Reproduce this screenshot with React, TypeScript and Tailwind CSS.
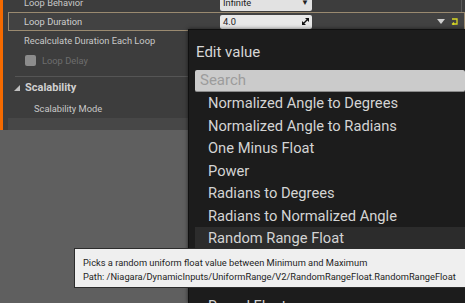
import React from "react";

const font = { fontFamily: "Roboto, 'Noto Sans', sans-serif" };

function Row({ children, className = "" }: { children: React.ReactNode; className?: string }) {
  return <div className={"flex items-center " + className}>{children}</div>;
}

export default function App() {
  const items = [
    "Normalized Angle to Degrees",
    "Normalized Angle to Radians",
    "One Minus Float",
    "Power",
    "Radians to Degrees",
    "Radians to Normalized Angle",
    "Random Range Float",
    "",
    "",
    "Round Float",
  ];
  return (
    <div className="relative w-[465px] h-[303px] overflow-hidden bg-[#5f5f5f]" style={font}>
      {/* details panel */}
      <div className="flex h-[130px]">
        <div className="w-[3px] bg-[#f56a00]" />
        <div className="flex-1 flex flex-col bg-[#3d3d3d] pl-[5px]">
          <div className="flex flex-col -mt-[6px]">
            <Row className="h-[18px] text-[9.3px] text-[#c8c8c8]">
              <div className="w-[212px] pl-[16px]">Loop Behavior</div>
              <div className="w-[92px] h-[16px] bg-[#e2e2e2] rounded-[2px] flex items-center justify-between px-[3px] text-[#222]">
                <span>Infinite</span>
                <span className="text-[8px]">▼</span>
              </div>
              <div className="flex-1" />
              <div className="w-px self-stretch bg-[#5a5a5a] mr-[3px]" />
            </Row>
            <Row className="h-[19px] text-[9.3px] text-[#cfcfcf] bg-[#424242] border border-[#9a8a70]">
              <div className="w-[211px] pl-[15px]">Loop Duration</div>
              <div className="w-[92px] h-[14px] bg-[#e8e8e8] rounded-[2px] flex items-center justify-between px-[3px] text-[#222]">
                <span>4.0</span>
                <svg width="7" height="7" viewBox="0 0 7 7">
                  <path d="M0 7 L3 7 L0 4 Z M7 0 L4 0 L7 3 Z M1 6 L6 1" stroke="#111" strokeWidth="1.4" fill="#111" />
                </svg>
              </div>
              <div className="flex-1" />
              <svg width="8" height="5" viewBox="0 0 8 5" className="mr-[6px]">
                <path d="M0 0 L8 0 L4 5 Z" fill="#cfcfcf" />
              </svg>
              <svg width="7" height="7" viewBox="0 0 7 7" className="mr-[6px]">
                <path d="M1 1 L6 1 L6 6 L2 6 M3 4.5 L1.5 6 L3 7.5" stroke="#d8d824" strokeWidth="1.3" fill="none" />
              </svg>
            </Row>
            <Row className="h-[20px] text-[9.3px] text-[#c8c8c8]">
              <div className="pl-[16px]">Recalculate Duration Each Loop</div>
            </Row>
            <Row className="h-[19px] text-[9.3px] text-[#6e6e6e]">
              <div className="ml-[17px] w-[11px] h-[11px] rounded-[2px] bg-[#8c8c8c]" />
              <div className="ml-[6px]">Loop Delay</div>
            </Row>
          </div>
          <div className="ml-[7px] mr-0 h-px bg-[#555] mt-[6px]" />
          <Row className="h-[22px] text-[11px] font-bold text-[#d0d0d0]">
            <svg width="6" height="6" viewBox="0 0 6 6" className="ml-[6px]">
              <path d="M6 0 L6 6 L0 6 Z" fill="#c0c0c0" />
            </svg>
            <div className="ml-[5px]">Scalability</div>
          </Row>
          <Row className="h-[19px] text-[9.3px] text-[#c8c8c8]">
            <div className="pl-[26px]">Scalability Mode</div>
          </Row>
          <div className="flex-1 bg-[#474747] ml-0" />
        </div>
      </div>

      {/* popup */}
      <div className="absolute left-[188px] top-[29px] w-[277px] h-[274px] bg-[#1c1c1c] border-l border-t border-[#101010] shadow-[0_0_4px_rgba(0,0,0,0.6)]">
        <div className="pl-[7px] pt-[12px] text-[15px] leading-[20px] text-[#d6d6d6]">Edit value</div>
        <div className="ml-[6px] mt-[8px] h-[22px] bg-[#cbcbcb] rounded-[2px] flex items-center pl-[5px] text-[15px] text-[#9c9c9c] border-b border-[#8a8a8a]">
          Search
        </div>
        <div className="flex flex-col">
          {items.map((t, i) => (
            <div
              key={i}
              className={
                "ml-[6px] h-[22.5px] flex items-center pl-[13px] text-[14.7px] text-[#d4d4d4] whitespace-nowrap " +
                (t === "Random Range Float" ? "bg-[#2c2c2c]" : "")
              }
            >
              {t}
            </div>
          ))}
        </div>
      </div>

      {/* tooltip */}
      <div className="absolute left-[74px] top-[248px] w-[392px] h-[40px] bg-[#efefef] border border-[#2c2c2c] pl-[8px] pt-[7px] text-[9.3px] leading-[14px] text-[#1e1e1e] whitespace-nowrap">
        <div>Picks a random uniform float value between Minimum and Maximum</div>
        <div>Path: /Niagara/DynamicInputs/UniformRange/V2/RandomRangeFloat.RandomRangeFloat</div>
      </div>
    </div>
  );
}
